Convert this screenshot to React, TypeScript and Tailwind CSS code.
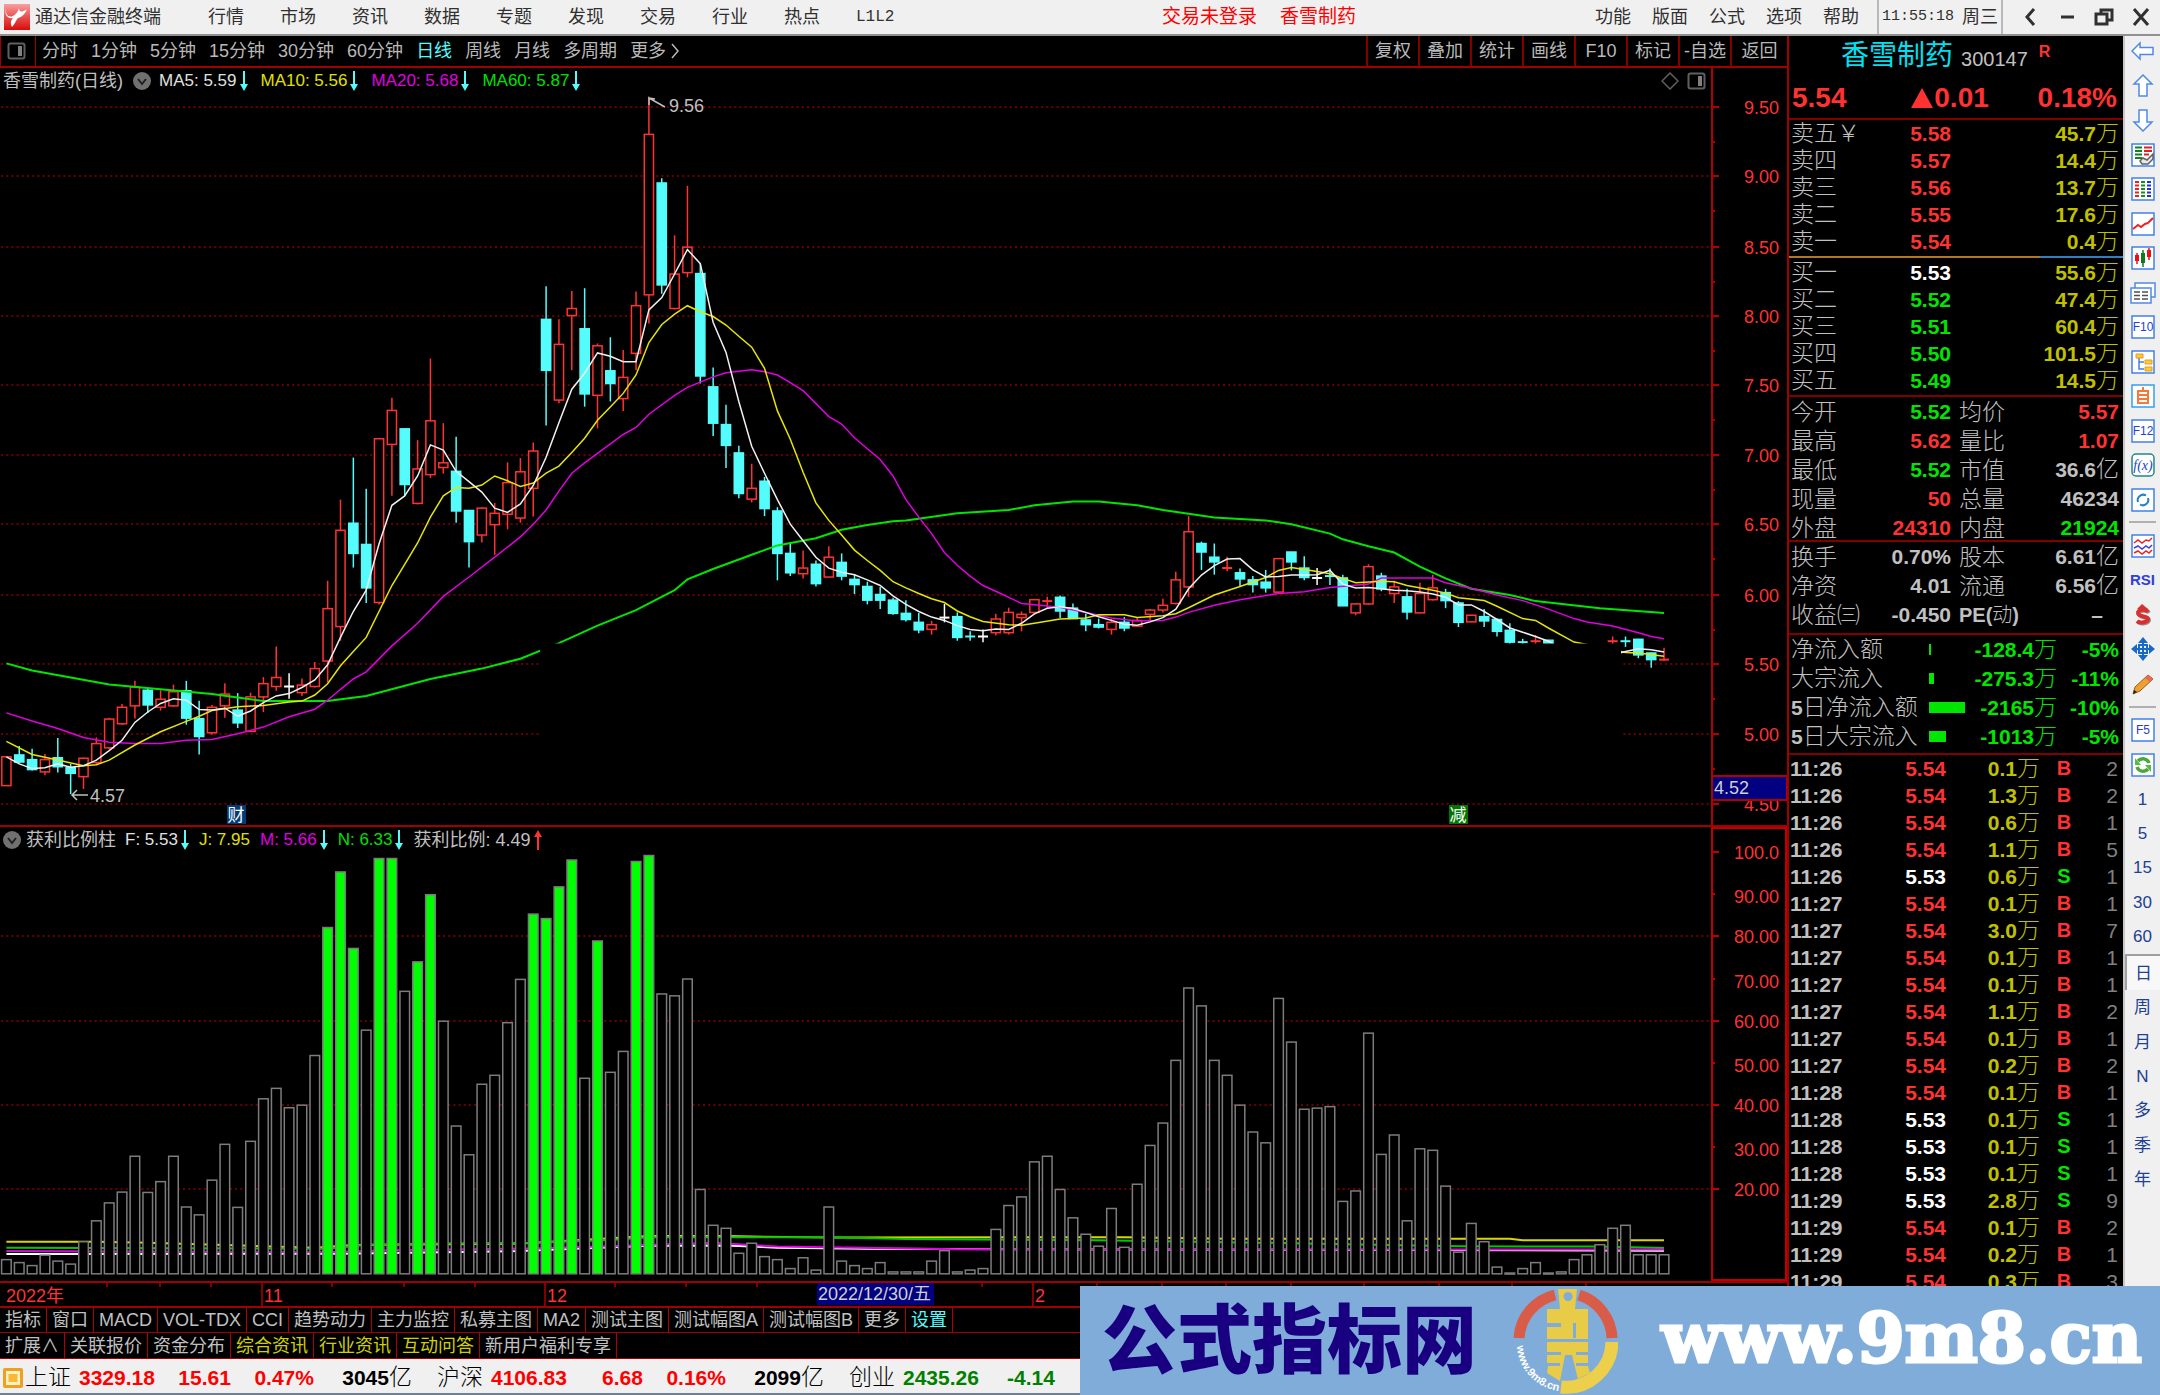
import type { ReactNode } from 'react';
import { clsx } from 'clsx';

type Candle = [kind: 'r' | 'c' | 'w', high: number, top: number, bottom: number, low: number];
type Point = [index: number, value: number];

const CANDLES: Candle[] = [
  ['r', 1412, 1413, 1474, 1474], ['c', 1390, 1409, 1424, 1426], ['c', 1396, 1419, 1440, 1442], ['r', 1407, 1419, 1445, 1452],
  ['c', 1373, 1415, 1434, 1446], ['c', 1428, 1436, 1448, 1492], ['r', 1415, 1416, 1455, 1481], ['r', 1372, 1385, 1425, 1430],
  ['r', 1330, 1333, 1394, 1397], ['r', 1301, 1308, 1343, 1345], ['r', 1252, 1265, 1305, 1332], ['c', 1268, 1272, 1303, 1320],
  ['r', 1272, 1291, 1308, 1315], ['r', 1260, 1275, 1305, 1307], ['c', 1252, 1273, 1331, 1345], ['c', 1294, 1332, 1370, 1408],
  ['r', 1303, 1308, 1362, 1366], ['r', 1257, 1280, 1305, 1330], ['c', 1278, 1314, 1341, 1352], ['r', 1277, 1286, 1359, 1360],
  ['r', 1244, 1258, 1286, 1318], ['r', 1179, 1245, 1264, 1273], ['w', 1236, 1264, 1264, 1290], ['r', 1247, 1261, 1277, 1284],
  ['r', 1212, 1226, 1264, 1266], ['r', 1040, 1099, 1210, 1255], ['r', 868, 933, 1137, 1167], ['c', 779, 918, 982, 1012],
  ['c', 845, 963, 1055, 1087], ['r', 737, 739, 1086, 1090], ['r', 652, 679, 751, 860], ['c', 717, 718, 836, 860],
  ['r', 742, 803, 876, 878], ['r', 569, 701, 815, 822], ['r', 706, 790, 800, 813], ['c', 735, 808, 892, 917],
  ['c', 890, 891, 957, 1012], ['r', 884, 886, 943, 959], ['r', 875, 897, 921, 985], ['r', 789, 832, 899, 931],
  ['r', 780, 809, 907, 917], ['r', 747, 765, 844, 904], ['c', 416, 486, 594, 711], ['r', 486, 539, 657, 664],
  ['r', 426, 463, 478, 594], ['c', 420, 506, 644, 671], ['r', 537, 542, 647, 717], ['c', 524, 595, 622, 660],
  ['r', 551, 609, 654, 680], ['r', 427, 457, 558, 594], ['r', 14, 94, 434, 495], ['c', 187, 197, 413, 432],
  ['r', 308, 390, 463, 465], ['r', 203, 333, 387, 397], ['c', 368, 389, 606, 622], ['c', 588, 629, 706, 733],
  ['c', 667, 709, 753, 801], ['c', 754, 769, 855, 865], ['r', 792, 844, 867, 874], ['c', 820, 829, 887, 903],
  ['c', 884, 892, 982, 1039], ['c', 959, 982, 1023, 1030], ['r', 976, 1013, 1025, 1035], ['c', 997, 1005, 1046, 1052],
  ['r', 967, 990, 1032, 1033], ['c', 982, 1001, 1030, 1039], ['c', 1026, 1037, 1048, 1068], ['c', 1042, 1052, 1081, 1090],
  ['c', 1053, 1069, 1081, 1100], ['c', 1076, 1081, 1109, 1112], ['c', 1081, 1109, 1122, 1126], ['c', 1108, 1128, 1144, 1151],
  ['r', 1125, 1133, 1143, 1154], ['w', 1089, 1118, 1118, 1128], ['c', 1107, 1116, 1160, 1167], ['c', 1147, 1158, 1158, 1167],
  ['w', 1143, 1158, 1158, 1170], ['r', 1110, 1121, 1150, 1156], ['r', 1097, 1107, 1150, 1154], ['r', 1105, 1111, 1118, 1147],
  ['r', 1080, 1080, 1107, 1112], ['r', 1074, 1083, 1083, 1097], ['c', 1071, 1075, 1104, 1119], ['c', 1088, 1098, 1120, 1121],
  ['c', 1110, 1123, 1133, 1147], ['c', 1120, 1133, 1138, 1141], ['r', 1121, 1128, 1143, 1154], ['c', 1117, 1128, 1140, 1147],
  ['r', 1119, 1124, 1136, 1138], ['r', 1100, 1102, 1111, 1126], ['r', 1078, 1092, 1102, 1107], ['r', 1021, 1038, 1088, 1090],
  ['r', 903, 936, 1053, 1074], ['c', 957, 961, 979, 1017], ['c', 961, 990, 1000, 1027], ['r', 989, 1013, 1016, 1020],
  ['c', 1014, 1023, 1036, 1052], ['c', 1030, 1038, 1048, 1065], ['c', 1017, 1043, 1055, 1065], ['r', 993, 993, 1064, 1066],
  ['c', 979, 979, 1000, 1018], ['c', 988, 1013, 1033, 1039], ['w', 1013, 1034, 1034, 1049], ['c', 1014, 1030, 1032, 1049],
  ['c', 1027, 1034, 1093, 1093], ['r', 1088, 1089, 1108, 1113], ['r', 1005, 1010, 1089, 1090], ['c', 1023, 1030, 1057, 1062],
  ['r', 1040, 1053, 1067, 1087], ['c', 1057, 1074, 1106, 1122], ['r', 1044, 1067, 1108, 1109], ['r', 1027, 1055, 1080, 1082],
  ['c', 1057, 1065, 1082, 1098], ['c', 1083, 1087, 1128, 1138], ['r', 1112, 1113, 1127, 1128], ['c', 1100, 1116, 1125, 1138],
  ['c', 1120, 1122, 1147, 1158], ['c', 1130, 1145, 1170, 1175], ['c', 1163, 1170, 1172, 1200], ['r', 1155, 1168, 1171, 1175],
  ['c', 1165, 1166, 1210, 1212], ['c', 1190, 1200, 1240, 1244], ['r', 1208, 1213, 1240, 1244], ['r', 1190, 1196, 1214, 1220],
  ['r', 1180, 1184, 1200, 1208], ['r', 1158, 1168, 1172, 1175], ['c', 1158, 1168, 1169, 1180], ['c', 1163, 1164, 1197, 1204],
  ['c', 1192, 1193, 1207, 1224], ['r', 1182, 1207, 1209, 1210],
];

const seq = (start: number, values: number[]): Point[] => values.map((v, i) => [start + i, v]);

const MA5 = seq(0, [
  1413, 1428, 1438, 1436, 1428, 1435, 1432, 1420, 1400, 1378, 1340, 1318, 1300, 1290, 1293, 1313, 1314, 1310, 1327, 1316,
  1298, 1284, 1279, 1266, 1250, 1218, 1160, 1105, 1060, 962, 880, 860, 818, 752, 763, 808, 830, 852, 886, 895,
  877, 838, 778, 705, 634, 600, 557, 564, 576, 576, 466, 440, 390, 338, 368, 492, 556, 660, 755, 812,
  868, 920, 955, 990, 1013, 1022, 1027, 1038, 1050, 1072, 1090, 1105, 1117, 1124, 1135, 1143, 1146, 1142, 1143, 1130,
  1110, 1098, 1095, 1099, 1107, 1116, 1124, 1132, 1134, 1127, 1118, 1100, 1057, 1028, 1008, 994, 993, 1017, 1032, 1031,
  1028, 1028, 1027, 1018, 1047, 1055, 1054, 1057, 1060, 1061, 1064, 1068, 1075, 1091, 1091, 1105, 1122, 1140, 1149, 1158,
  1168, 1185, 1200, 1202, 1200, 1197, 1190, 1184, 1186, 1191,
]);
const MA10: Point[] = [
  [0, 1380], [2, 1408], [4, 1420], [6, 1432], [7, 1430], [8, 1420], [10, 1388], [12, 1360], [14, 1338], [15, 1327], [16, 1315],
  [18, 1307], [20, 1304], [22, 1297], [23, 1295], [24, 1282], [25, 1258], [26, 1220], [27, 1190], [28, 1160], [29, 1105],
  [30, 1050], [31, 1005], [32, 960], [33, 905], [34, 860], [35, 842], [36, 844], [37, 837], [38, 818], [39, 828], [40, 840],
  [41, 833], [42, 812], [43, 797], [44, 768], [45, 738], [46, 700], [47, 672], [48, 643], [49, 604], [50, 535], [51, 497],
  [52, 475], [53, 457], [54, 470], [55, 480], [56, 498], [57, 522], [58, 545], [59, 590], [60, 680], [61, 740], [62, 810],
  [63, 875], [64, 912], [65, 943], [66, 975], [67, 997], [68, 1018], [69, 1042], [70, 1055], [71, 1067], [72, 1078],
  [73, 1086], [74, 1104], [75, 1116], [76, 1126], [78, 1133], [79, 1134], [80, 1130], [82, 1121], [84, 1119], [85, 1112],
  [87, 1112], [88, 1118], [90, 1114], [91, 1110], [92, 1097], [94, 1070], [96, 1052], [98, 1033], [99, 1018], [100, 1012],
  [102, 1020], [103, 1025], [104, 1035], [105, 1044], [107, 1041], [108, 1042], [109, 1050], [111, 1060], [112, 1066],
  [113, 1076], [115, 1082], [116, 1094], [118, 1120], [119, 1124], [120, 1140], [122, 1170], [124, 1180], [126, 1192],
  [127, 1193], [129, 1200],
];
const MA20: Point[] = [
  [0, 1320], [2, 1337], [4, 1353], [6, 1372], [8, 1382], [10, 1385], [12, 1385], [14, 1378], [16, 1376], [18, 1364], [20, 1350],
  [22, 1328], [24, 1312], [25, 1293], [26, 1270], [27, 1248], [28, 1233], [30, 1178], [32, 1130], [34, 1073], [36, 1032],
  [38, 990], [40, 947], [41, 920], [42, 890], [43, 850], [44, 812], [45, 790], [46, 770], [48, 730], [49, 715], [50, 687],
  [52, 647], [53, 630], [55, 608], [56, 599], [58, 593], [59, 597], [60, 604], [61, 620], [62, 637], [64, 692], [65, 708],
  [66, 737], [67, 760], [68, 783], [69, 818], [70, 868], [71, 905], [72, 940], [73, 980], [74, 1007], [75, 1030], [76, 1050],
  [77, 1062], [79, 1088], [82, 1096], [84, 1107], [86, 1119], [88, 1125], [90, 1124], [91, 1117], [92, 1107], [94, 1092],
  [96, 1080], [99, 1067], [101, 1063], [103, 1054], [106, 1047], [107, 1034], [111, 1034], [112, 1044], [114, 1056],
  [116, 1070], [118, 1082], [120, 1100], [122, 1120], [123, 1127], [125, 1136], [127, 1150], [128, 1158], [129, 1163],
];
const MA60: Point[] = [
  [0, 1215], [2, 1230], [5, 1245], [8, 1260], [12, 1270], [16, 1280], [20, 1295], [25, 1295], [28, 1284], [33, 1248], [37, 1226],
  [40, 1205], [43, 1172], [46, 1135], [49, 1102], [52, 1060], [53, 1037], [55, 1015], [58, 985], [60, 965], [63, 950],
  [65, 932], [67, 922], [69, 914], [70, 912], [74, 897], [78, 890], [80, 880], [83, 872], [85, 872], [88, 880], [90, 890],
  [94, 906], [98, 912], [100, 920], [103, 940], [104, 952], [106, 967], [108, 980], [110, 1010], [112, 1035], [114, 1057],
  [117, 1070], [119, 1083], [124, 1098], [129, 1108],
];

const PROFIT = [
  1205, 1213, 1221, 1193, 1209, 1217, 1157, 1101, 1053, 1024, 928, 1025, 996, 928, 1064, 1085, 992, 896, 1065, 888,
  774, 746, 798, 791, 658, 315, 166, 371, 590, 130, 130, 486, 407, 227, 566, 847, 924, 735, 711, 570,
  454, 279, 291, 206, 134, 719, 351, 703, 647, 138, 122, 493, 498, 453, 1017, 1113, 1121, 1188, 1161, 1197,
  1205, 1229, 1200, 1233, 1064, 1209, 1221, 1229, 1213, 1238, 1238, 1238, 1209, 1181, 1238, 1233, 1229, 1124, 1060, 1037,
  943, 928, 1017, 1093, 1137, 1169, 1068, 1172, 1003, 899, 839, 671, 477, 525, 671, 711, 791, 863, 892, 505,
  622, 802, 799, 795, 1049, 1021, 598, 923, 871, 1101, 908, 912, 1008, 1185, 1108, 1157, 1225, 1241, 1229, 1213,
  1241, 1238, 1205, 1192, 1165, 1121, 1113, 1192, 1192, 1192,
];

const SUB_LINES: { color: string; points: Point[] }[] = [
  { color: '#d8d800', points: [[0, 1157], [7, 1157], [11, 1160], [15, 1164], [19, 1168], [24, 1173], [27, 1166], [40, 1162], [50, 1142], [56, 1142], [64, 1146], [87, 1145], [95, 1149], [117, 1149], [118, 1153], [129, 1153]] },
  { color: '#00c800', points: [[0, 1173], [25, 1176], [28, 1165], [33, 1162], [41, 1160], [47, 1152], [50, 1145], [64, 1145], [70, 1150], [85, 1153], [100, 1161], [113, 1169], [124, 1170], [129, 1174]] },
  { color: '#ffffff', points: [[0, 1190], [26, 1189], [40, 1182], [50, 1168], [56, 1167], [60, 1173], [67, 1176], [129, 1181]] },
  { color: '#e000e0', points: [[0, 1182], [25, 1185], [30, 1180], [41, 1175], [48, 1168], [55, 1160], [60, 1170], [74, 1177], [129, 1178]] },
];

const PRICE_GRID = [
  ['9.50', 107], ['9.00', 176], ['8.50', 247], ['8.00', 316], ['7.50', 385], ['7.00', 455], ['6.50', 524],
  ['6.00', 595], ['5.50', 664], ['5.00', 734], ['4.50', 804],
] as [string, number][];

const PERCENT_GRID = [
  ['100.0', 852, 852], ['90.00', 896, 894], ['80.00', 936, 936], ['70.00', 981, 979], ['60.00', 1021, 1021],
  ['50.00', 1065, 1063], ['40.00', 1105, 1105], ['30.00', 1149, 1147], ['20.00', 1189, 1189],
] as [string, number, number][];

const cx = (i: number) => 6.4 + i * 12.85;
const priceY = (v: number) => v / 2.119 - 4;
const subY = (v: number) => v / 2.68 - 43;
const toPath = (points: Point[], y: (v: number) => number) =>
  points.map(([i, v]) => `${cx(i).toFixed(1)},${y(v).toFixed(1)}`).join(' ');

function PriceChart() {
  return (
    <svg viewBox="0 0 1711 731" preserveAspectRatio="none" className="block h-[731px] w-full">
      {PRICE_GRID.map(([label, y]) => (
        <line key={label} x1="1" x2="1711" y1={y - 94} y2={y - 94} stroke="#8c0000" strokeWidth="1.5" strokeDasharray="2 3.2" />
      ))}
      {CANDLES.map(([kind, high, top, bottom, low], i) => {
        const x = cx(i);
        const color = kind === 'r' ? '#ff3232' : kind === 'c' ? '#54fcfc' : '#ffffff';
        const h = priceY(bottom) - priceY(top);
        return (
          <g key={i} stroke={color} strokeWidth="1.5">
            <line x1={x} x2={x} y1={priceY(high)} y2={priceY(low)} />
            {h < 2 ? (
              <line x1={x - 5} x2={x + 5} y1={priceY(top)} y2={priceY(top)} strokeWidth="2" />
            ) : (
              <rect x={x - 4.6} y={priceY(top)} width="9.2" height={h} fill={kind === 'c' ? color : '#000'} />
            )}
          </g>
        );
      })}
      <g fill="none" strokeWidth="1.5">
        <polyline points={toPath(MA60, priceY)} stroke="#00e600" strokeWidth="2" />
        <polyline points={toPath(MA20, priceY)} stroke="#e000e0" />
        <polyline points={toPath(MA10, priceY)} stroke="#e6e600" />
        <polyline points={toPath(MA5, priceY)} stroke="#f0f0f0" />
      </g>
      <rect x="540" y="549.5" width="1081" height="105" fill="#000" />
      <g fill="none" stroke="#c0c0c0" strokeWidth="1.5">
        <path d="M655 5l-6-1M649 11V4l16 9" />
        <path d="M88 701H72M77 696l-5 5 5 5" />
      </g>
      <g fill="#c0c0c0" fontSize="18" className="font-['Liberation_Sans',sans-serif]">
        <text x="669" y="18">9.56</text>
        <text x="90" y="708">4.57</text>
      </g>
      <rect x="227" y="711" width="19" height="19" fill="#003c78" />
      <rect x="1449" y="711" width="19" height="19" fill="#007800" />
      <g fill="#fff" fontSize="17" textAnchor="middle" className="font-['Noto_Sans_CJK_SC',sans-serif]">
        <text x="236" y="727">财</text>
        <text x="1458" y="727">减</text>
      </g>
    </svg>
  );
}

function ProfitChart() {
  const base = subY(1243);
  return (
    <svg viewBox="0 0 1711 428" preserveAspectRatio="none" className="block h-[428px] w-full">
      {PERCENT_GRID.filter((_, i) => i > 0 && i % 2 === 0).map(([label, , y]) => (
        <line key={label} x1="1" x2="1711" y1={y - 853} y2={y - 853} stroke="#8c0000" strokeWidth="1.5" strokeDasharray="2 3.2" />
      ))}
      {SUB_LINES.map((line) => (
        <polyline key={line.color} points={toPath(line.points, subY)} fill="none" stroke={line.color} strokeWidth="2" />
      ))}
      {PROFIT.map((v, i) => (
        <rect
          key={i}
          x={cx(i) - 4.8}
          y={subY(v)}
          width="9.6"
          height={Math.max(base - subY(v), 1)}
          fill={v < 420 ? '#00ff00' : '#000'}
          stroke="#7c7c7c"
          strokeWidth="1.5"
        />
      ))}
    </svg>
  );
}

function PriceAxis() {
  return (
    <svg viewBox="0 0 76 757" className="block h-[757px] w-[76px] shrink-0">
      <path d="M1 0V757" stroke="#b00000" strokeWidth="2" />
      {PRICE_GRID.map(([label, y], i) => (
        <g key={label}>
          <path d={`M2 ${y - 68}h6`} stroke="#b00000" strokeWidth="2" />
          {i < 10 && <path d={`M2 ${y - 33}h2`} stroke="#b00000" strokeWidth="2" />}
          <text x="68" y={y - 61} fill="#ff3232" fontSize="18" textAnchor="end" className="font-['Liberation_Sans',sans-serif]">
            {label}
          </text>
        </g>
      ))}
      <rect x="1" y="708" width="75" height="24" fill="#000080" stroke="#b00000" strokeWidth="2" />
      <text x="3" y="726" fill="#d0d0d0" fontSize="18" className="font-['Liberation_Sans',sans-serif]">4.52</text>
    </svg>
  );
}

function PercentAxis() {
  return (
    <svg viewBox="0 0 76 454" className="block h-[454px] w-[76px] shrink-0">
      <rect x="1" y="1" width="74" height="452" fill="none" stroke="#c00000" strokeWidth="2" />
      {PERCENT_GRID.map(([label, y, tick], i) => (
        <g key={label}>
          <path d={`M2 ${tick - 827}h${i % 2 ? 2 : 6}`} stroke="#c00000" strokeWidth="2" />
          <text x="68" y={y - 820} fill="#ff3232" fontSize="18" textAnchor="end" className="font-['Liberation_Sans',sans-serif]">
            {label}
          </text>
        </g>
      ))}
    </svg>
  );
}

const MINOR_TICKS = [107, 160, 211, 332, 404, 475, 615, 686, 757, 982, 1097, 1162, 1226, 1291, 1364, 1439, 1512, 1586];

function TimeAxis() {
  return (
    <svg viewBox="0 0 1787 23" preserveAspectRatio="none" className="block h-[23px] w-full font-['Liberation_Sans','Noto_Sans_CJK_SC',sans-serif]">
      {MINOR_TICKS.map((x) => (
        <path key={x} d={`M${x} 0v4`} stroke="#b00000" strokeWidth="1.5" />
      ))}
      {[262, 545, 1033].map((x) => (
        <path key={x} d={`M${x} 0v23`} stroke="#b00000" strokeWidth="1.5" />
      ))}
      <g fill="#ff3232" fontSize="18">
        <text x="6" y="19">2022年</text>
        <text x="264" y="19">11</text>
        <text x="547" y="19">12</text>
        <text x="1035" y="19">2</text>
      </g>
      <rect x="817" y="0" width="117" height="22" fill="#000080" />
      <text x="818" y="17" fill="#d0d0d0" fontSize="18">2022/12/30/五</text>
    </svg>
  );
}

const MENU = ['行情', '市场', '资讯', '数据', '专题', '发现', '交易', '行业', '热点'];
const MENU_RIGHT = ['功能', '版面', '公式', '选项', '帮助'];

function MenuBar() {
  return (
    <header className="flex h-[36px] items-center border-b-2 border-[#909090] bg-[#f0f0f0] text-[18px] leading-[24px] text-[#303030]">
      <svg viewBox="0 0 26 26" className="ml-[4px] h-[26px] w-[26px]">
        <defs>
          <linearGradient id="brand" x1="0" y1="0" x2="0" y2="1">
            <stop offset="0" stopColor="#f8a0a0" />
            <stop offset=".5" stopColor="#e85050" />
            <stop offset="1" stopColor="#d80c0c" />
          </linearGradient>
        </defs>
        <rect width="26" height="26" fill="url(#brand)" />
        <path d="M2 4C1 10 4 14 9 12C12 10 14 8 15 4C15 8 17 9 23 5C21 10 18 13 14 14C12 16 11 20 8 23C6 19 7 16 9 14C4 15 0 11 2 4Z" fill="#fff" />
      </svg>
      <span className="ml-[5px]">通达信金融终端</span>
      <nav className="ml-[47px] flex gap-9">
        {MENU.map((item) => (
          <button key={item}>{item}</button>
        ))}
        <button className="font-['Liberation_Mono',monospace] text-[16px]">L1L2</button>
      </nav>
      <div className="ml-auto flex gap-[23px] text-[19px] text-[#ff0000]">
        <button>交易未登录</button>
        <button>香雪制药</button>
      </div>
      <nav className="ml-[239px] flex gap-[21px]">
        {MENU_RIGHT.map((item) => (
          <button key={item}>{item}</button>
        ))}
      </nav>
      <div className="ml-[18px] flex h-full w-[126px] items-center justify-between border-x-2 border-[#b8b8b8] px-[3px]">
        <time className="font-['Liberation_Mono',monospace] text-[15px]">11:55:18</time>
        <span>周三</span>
      </div>
      <div className="flex items-center gap-[17px] pr-[9px] pl-[17px]">
        <button aria-label="收起"><svg viewBox="0 0 20 20" className="h-5 w-5" fill="none" stroke="#303030" strokeWidth="3"><path d="M14 2L7 10l7 8" /></svg></button>
        <button aria-label="最小化"><svg viewBox="0 0 20 20" className="h-5 w-5" fill="none" stroke="#303030" strokeWidth="3"><path d="M4 10h13" /></svg></button>
        <button aria-label="还原"><svg viewBox="0 0 20 20" className="h-5 w-5" fill="none" stroke="#303030" strokeWidth="3"><path d="M2 7h11v10H2zM7 7V3h11v10h-5" /></svg></button>
        <button aria-label="关闭"><svg viewBox="0 0 20 20" className="h-5 w-5" fill="none" stroke="#303030" strokeWidth="3"><path d="M3 2l14 16M17 2L3 18" /></svg></button>
      </div>
    </header>
  );
}

const PERIODS = ['分时', '1分钟', '5分钟', '15分钟', '30分钟', '60分钟', '日线', '周线', '月线', '多周期'];
const CHART_ACTIONS = ['复权', '叠加', '统计', '画线', 'F10', '标记', '-自选', '返回'];

function PanelIcon() {
  return (
    <svg viewBox="0 0 20 18" className="h-[18px] w-[20px]">
      <rect x="1.5" y="1.5" width="16" height="15" rx="2" fill="none" stroke="#606060" strokeWidth="2" />
      <rect x="11" y="4" width="4" height="10" fill="#808080" />
    </svg>
  );
}

function PeriodBar() {
  return (
    <div className="flex h-[32px] border-b-2 border-[#a00000] text-[18px] text-[#b8b8b8]">
      <button aria-label="侧栏" className="flex w-[36px] items-center border-r border-l border-[#a00000] pl-[6px]"><PanelIcon /></button>
      <nav className="flex items-center gap-[13px] pl-[6px]">
        {PERIODS.map((item) => (
          <button key={item} className={clsx(item === '日线' && 'text-[#54fcfc]')}>{item}</button>
        ))}
        <button className="flex items-center">
          更多
          <svg viewBox="0 0 12 16" className="ml-[3px] h-4 w-3" fill="none" stroke="#b8b8b8" strokeWidth="1.5"><path d="M3 1l6 7-6 7" /></svg>
        </button>
      </nav>
      <nav className="ml-auto flex">
        {CHART_ACTIONS.map((item) => (
          <button key={item} className={clsx('border-l-2 border-[#800000] text-center', item === '返回' ? 'w-[57px]' : 'w-[52px]')}>{item}</button>
        ))}
      </nav>
    </div>
  );
}

function DropIcon() {
  return (
    <svg viewBox="0 0 18 18" className="h-[18px] w-[18px]">
      <circle cx="9" cy="9" r="9" fill="#707070" />
      <path d="M5 7l4 5 4-5" fill="none" stroke="#202020" strokeWidth="2" />
    </svg>
  );
}

function Arrow({ up = false }: { up?: boolean }) {
  return (
    <svg viewBox="0 0 8 20" className="ml-[3px] h-5 w-2">
      {up ? <path d="M3 20V7H0l4-7 4 7H5v13z" fill="#ff3232" /> : <path d="M3 0v13H0l4 7 4-7H5V0z" fill="#54fcfc" />}
    </svg>
  );
}

function Legend({ color, children }: { color: string; children: ReactNode }) {
  return <span className={clsx('flex items-center', color)}>{children}</span>;
}

function PriceHeader() {
  return (
    <div className="flex h-[26px] items-center pr-[4px] pl-[3px] text-[17px] text-[#c0c0c0]">
      <span className="text-[18px]">香雪制药(日线)</span>
      <button aria-label="指标菜单" className="mr-[8px] ml-[10px]"><DropIcon /></button>
      <div className="flex gap-[13px]">
        <Legend color="text-[#e0e0e0]">MA5: 5.59<Arrow /></Legend>
        <Legend color="text-[#e0e000]">MA10: 5.56<Arrow /></Legend>
        <Legend color="text-[#e000e0]">MA20: 5.68<Arrow /></Legend>
        <Legend color="text-[#00e000]">MA60: 5.87<Arrow /></Legend>
      </div>
      <svg viewBox="0 0 18 18" className="mr-[8px] ml-auto h-[18px] w-[18px]"><path d="M9 1l8 8-8 8-8-8z" fill="none" stroke="#606060" strokeWidth="1.5" /></svg>
      <PanelIcon />
    </div>
  );
}

function ProfitHeader() {
  return (
    <div className="flex h-[26px] items-center pl-[3px] text-[17px] text-[#c0c0c0]">
      <button aria-label="指标菜单" className="mr-[5px]"><DropIcon /></button>
      <span className="text-[18px]">获利比例柱</span>
      <div className="ml-[9px] flex gap-[10px]">
        <Legend color="text-[#e0e0e0]">F: 5.53<Arrow /></Legend>
        <Legend color="text-[#e0e000]">J: 7.95</Legend>
        <Legend color="text-[#e000e0]">M: 5.66<Arrow /></Legend>
        <Legend color="text-[#00e000]">N: 6.33<Arrow /></Legend>
        <Legend color="text-[#c0c0c0]"><span className="text-[18px]">获利比例: 4.49</span><Arrow up /></Legend>
      </div>
    </div>
  );
}

const INDICATORS = ['指标', '窗口', 'MACD', 'VOL-TDX', 'CCI', '趋势动力', '主力监控', '私募主图', 'MA2', '测试主图', '测试幅图A', '测试幅图B', '更多', '设置'];
const EXTENSIONS = ['扩展∧', '关联报价', '资金分布', '综合资讯', '行业资讯', '互动问答', '新用户福利专享'];
const HIGHLIGHTED = ['综合资讯', '行业资讯', '互动问答'];

function IndicatorTabs() {
  return (
    <div className="text-[18px] leading-[24px] whitespace-nowrap text-[#c0c0c0]">
      <nav className="flex h-[26px] border-t-2 border-[#a00000]">
        {INDICATORS.map((item) => (
          <button key={item} className={clsx('border-r border-[#b00000] px-[5px]', item === '设置' && 'text-[#54fcfc]')}>{item}</button>
        ))}
      </nav>
      <nav className="flex h-[27px] border-y border-[#a00000]">
        {EXTENSIONS.map((item) => (
          <button key={item} className={clsx('border-r border-[#b00000] px-[5px]', HIGHLIGHTED.includes(item) && 'text-[#d0d000]')}>{item}</button>
        ))}
      </nav>
    </div>
  );
}

// Digits are bold while the trailing unit keeps the regular weight
function Num({ value, className }: { value: string; className?: string }) {
  const unit = /[万亿]$/.test(value) ? value.slice(-1) : '';
  return (
    <span className={clsx('whitespace-nowrap', className)}>
      <b>{unit ? value.slice(0, -1) : value}</b>
      {unit && <span className="text-[23px] font-light">{unit}</span>}
    </span>
  );
}

const RED = 'text-[#ff3232]';
const GREEN = 'text-[#00e600]';
const WHITE = 'text-white';
const GRAY = 'text-[#c0c0c0]';
const GOLD = 'text-[#c0c000]';

const ASKS = [['卖五', '5.58', '45.7万'], ['卖四', '5.57', '14.4万'], ['卖三', '5.56', '13.7万'], ['卖二', '5.55', '17.6万'], ['卖一', '5.54', '0.4万']];
const BIDS = [['买一', '5.53', '55.6万'], ['买二', '5.52', '47.4万'], ['买三', '5.51', '60.4万'], ['买四', '5.50', '101.5万'], ['买五', '5.49', '14.5万']];

const STATS = [
  ['今开', '5.52', GREEN, '均价', '5.57', RED],
  ['最高', '5.62', RED, '量比', '1.07', RED],
  ['最低', '5.52', GREEN, '市值', '36.6亿', GRAY],
  ['现量', '50', RED, '总量', '46234', GRAY],
  ['外盘', '24310', RED, '内盘', '21924', GREEN],
];
const RATIOS = [
  ['换手', '0.70%', GRAY, '股本', '6.61亿', GRAY],
  ['净资', '4.01', GRAY, '流通', '6.56亿', GRAY],
  ['收益㈢', '-0.450', GRAY, 'PE(动)', '–', GRAY],
];
const FLOWS: [string, number, string, string][] = [
  ['净流入额', 2, '-128.4万', '-5%'],
  ['大宗流入', 5, '-275.3万', '-11%'],
  ['5日净流入额', 36, '-2165万', '-10%'],
  ['5日大宗流入', 17, '-1013万', '-5%'],
];
const TRADES = [
  ['11:26', '5.54', '0.1', 'B', '2'], ['11:26', '5.54', '1.3', 'B', '2'], ['11:26', '5.54', '0.6', 'B', '1'], ['11:26', '5.54', '1.1', 'B', '5'],
  ['11:26', '5.53', '0.6', 'S', '1'], ['11:27', '5.54', '0.1', 'B', '1'], ['11:27', '5.54', '3.0', 'B', '7'], ['11:27', '5.54', '0.1', 'B', '1'],
  ['11:27', '5.54', '0.1', 'B', '1'], ['11:27', '5.54', '1.1', 'B', '2'], ['11:27', '5.54', '0.1', 'B', '1'], ['11:27', '5.54', '0.2', 'B', '2'],
  ['11:28', '5.54', '0.1', 'B', '1'], ['11:28', '5.53', '0.1', 'S', '1'], ['11:28', '5.53', '0.1', 'S', '1'], ['11:28', '5.53', '0.1', 'S', '1'],
  ['11:29', '5.53', '2.8', 'S', '9'], ['11:29', '5.54', '0.1', 'B', '2'], ['11:29', '5.54', '0.2', 'B', '1'], ['11:29', '5.54', '0.3', 'B', '3'],
];

function OrderRows({ rows, ask }: { rows: string[][]; ask?: boolean }) {
  return (
    <table className="w-full table-fixed leading-[27px]">
      <tbody>
        {rows.map(([label, price, volume], i) => (
          <tr key={label} className="h-[27px]">
            <th className="w-[80px] p-0 text-left text-[23px] font-light whitespace-nowrap">
              {label}
              {ask && i === 0 && <span>￥</span>}
            </th>
            <td className="w-[80px] p-0 text-right"><Num value={price} className={ask ? RED : i === 0 ? WHITE : GREEN} /></td>
            <td className="p-0 text-right"><Num value={volume} className={GOLD} /></td>
          </tr>
        ))}
      </tbody>
    </table>
  );
}

function StatRows({ rows }: { rows: string[][] }) {
  return (
    <table className="w-full table-fixed leading-[28px]">
      <tbody>
        {rows.map(([a, av, ac, b, bv, bc]) => (
          <tr key={a} className="h-[29px]">
            <th className="w-[80px] p-0 text-left text-[23px] font-light">{a}</th>
            <td className="w-[80px] p-0 text-right"><Num value={av} className={ac} /></td>
            <th className="w-[86px] p-0 pl-[8px] text-left text-[23px] font-light whitespace-nowrap">
              {b.startsWith('PE') ? <span className="text-[20px]"><b className="font-bold">PE(</b>动<b className="font-bold">)</b></span> : b}
            </th>
            <td className={clsx('p-0 text-right', bv === '–' && 'pr-[16px]')}><Num value={bv} className={bc} /></td>
          </tr>
        ))}
      </tbody>
    </table>
  );
}

function QuotePanel() {
  return (
    <aside className="w-[336px] shrink-0 border-l-2 border-[#a00000] text-[21px] text-[#c0c0c0]">
      <div className="flex h-[40px] items-center pl-[52px] leading-[40px]">
        <h1 className="text-[28px] text-[#00e0f0]">香雪制药</h1>
        <span className="mt-[6px] ml-[8px] text-[20px]">300147</span>
        <b className="-mt-[8px] ml-[11px] text-[16px] text-[#ff3232]">R</b>
      </div>
      <div className="flex h-[44px] items-center justify-between border-b-2 border-[#800000] pt-[2px] pr-[6px] pl-[3px] text-[28px] font-bold text-[#ff3232]">
        <span>5.54</span>
        <span className="flex items-center pl-[16px]">
          <svg viewBox="0 0 22 20" className="mr-[1px] h-5 w-[22px]"><path d="M11 0l11 20H0z" fill="#ff3232" /></svg>
          0.01
        </span>
        <span>0.18%</span>
      </div>
      <div className="h-[136px] pr-[4px] pl-[2px]"><OrderRows rows={ASKS} ask /></div>
      <div className="flex h-[2px]"><div className="w-3/4 bg-[#b07820]" /><div className="flex-1 bg-[#3080c0]" /></div>
      <div className="h-[139px] border-b-2 border-[#800000] pt-[1px] pr-[4px] pl-[2px]"><OrderRows rows={BIDS} /></div>
      <div className="h-[145px] border-b-2 border-[#800000] pr-[4px] pl-[2px]"><StatRows rows={STATS} /></div>
      <div className="h-[93px] border-b-2 border-[#800000] pr-[4px] pl-[2px]"><StatRows rows={RATIOS} /></div>
      <div className="h-[120px] border-b-2 border-[#800000] pr-[4px] pl-[2px]">
        {FLOWS.map(([label, width, amount, percent]) => (
          <div key={label} className="flex h-[29px] items-center">
            <span className="w-[138px] text-[23px] font-light whitespace-nowrap">
              {label.startsWith('5') ? <><b className="text-[21px] font-bold">5</b>{label.slice(1)}</> : label}
            </span>
            <i className="block h-[11px] bg-[#00e600]" style={{ width }} />
            <Num value={amount} className="ml-auto text-[#00e600]" />
            <Num value={percent} className="w-[62px] text-right text-[#00e600]" />
          </div>
        ))}
      </div>
      <table className="w-full table-fixed leading-[27px]">
        <tbody>
          {TRADES.map(([time, price, volume, side, count], i) => (
            <tr key={i} className="h-[27px]">
              <td className="w-[60px] p-0 pl-[1px] font-bold">{time}</td>
              <td className={clsx('w-[97px] p-0 text-right font-bold', price === '5.54' ? RED : WHITE)}>{price}</td>
              <td className="w-[94px] p-0 text-right"><Num value={`${volume}万`} className={GOLD} /></td>
              <td className={clsx('w-[48px] p-0 text-center text-[20px] font-bold', side === 'B' ? RED : GREEN)}>{side}</td>
              <td className="p-0 pr-[5px] text-right text-[#808080]">{count}</td>
            </tr>
          ))}
        </tbody>
      </table>
    </aside>
  );
}

function Boxed({ children, stroke = '#4080e8' }: { children?: ReactNode; stroke?: string }) {
  return (
    <svg viewBox="0 0 24 24" className="h-6 w-6">
      <rect x="1" y="1" width="22" height="22" fill="#fff" stroke={stroke} strokeWidth="1.5" />
      {children}
    </svg>
  );
}

function ArrowIcon({ d }: { d: string }) {
  return (
    <svg viewBox="0 0 24 24" className="h-6 w-6"><path d={d} fill="#fff" stroke="#5088e8" strokeWidth="1.5" /></svg>
  );
}

function BoxedText({ children }: { children: string }) {
  return (
    <Boxed>
      <text x="12" y="16" textAnchor="middle" fontSize="12" fill="#2840d0" className="font-['Liberation_Sans',sans-serif]">{children}</text>
    </Boxed>
  );
}

const TOOLS: [string, ReactNode][] = [
  ['后退', <ArrowIcon d="M1 12l8-8v4.500h13v7H9V20z" />],
  ['上移', <ArrowIcon d="M12 1l9 9h-5v12H8V10H3z" />],
  ['下移', <ArrowIcon d="M12 23l9-9h-5V2H8v12H3z" />],
  ['报价', (
    <Boxed>
      <path d="M4 4.500h7M4 8h7M4 11.500h7M4 15h7" stroke="#108020" strokeWidth="2" />
      <path d="M13 4.500h8M13 8h8M13 11.500h5" stroke="#e02020" strokeWidth="2" />
      <path d="M9 18l3-3 4 2 6-6v5l-5 5h-6z" fill="#e8e8e8" stroke="#606060" strokeWidth="1.5" />
    </Boxed>
  )],
  ['列表', (
    <Boxed>
      <path d="M6 4v16" stroke="#f02020" strokeWidth="4" strokeDasharray="2 1.500" />
      <path d="M12 4v16" stroke="#109020" strokeWidth="4" strokeDasharray="2 1.500" />
      <path d="M18 4v16" stroke="#2030e0" strokeWidth="4" strokeDasharray="2 1.500" />
    </Boxed>
  )],
  ['分时', <Boxed><path d="M2 17l5-4 3 2 4-3 3-1 5-5" fill="none" stroke="#f02020" strokeWidth="2" /></Boxed>],
  ['K线', (
    <Boxed>
      <path d="M6 7v11M18 2v12" stroke="#e81010" strokeWidth="1.5" /><path d="M4 9h4v6H4zM16 4h4v7h-4z" fill="#e81010" />
      <path d="M12 4v17" stroke="#107820" strokeWidth="1.5" /><path d="M10 7h4v10h-4z" fill="#107820" />
    </Boxed>
  )],
  ['多窗', (
    <svg viewBox="0 0 26 24" className="h-6 w-[26px]">
      <path d="M5 2h20v14H5z" fill="#fff" stroke="#5088e8" strokeWidth="1.5" />
      <path d="M1 7h20v15H1z" fill="#fff" stroke="#5088e8" strokeWidth="1.5" />
      <path d="M4 11h6M12 11h6M4 14.500h6M12 14.500h6M4 18h6M12 18h6" stroke="#505050" strokeWidth="1.5" />
    </svg>
  )],
  ['F10', <BoxedText>F10</BoxedText>],
  ['树形', (
    <Boxed>
      <path d="M8 8v11h5M8 12h5" fill="none" stroke="#4080e8" strokeWidth="1.5" />
      <path d="M5 4h7v4H5zM14 10h7v4h-7zM14 17h7v4h-7z" fill="#ffc838" stroke="#e0a020" />
    </Boxed>
  )],
  ['自选', (
    <Boxed stroke="#30a0f0">
      <path d="M7 7h10v12H7zM7 11h10M7 15h10M12 3v4" fill="none" stroke="#f87838" strokeWidth="2" />
    </Boxed>
  )],
  ['F12', <BoxedText>F12</BoxedText>],
  ['公式', (
    <svg viewBox="0 0 24 24" className="h-6 w-6">
      <rect x="1" y="1" width="22" height="22" rx="4" fill="#fff" stroke="#208888" strokeWidth="1.5" />
      <text x="12" y="17" textAnchor="middle" fontSize="14" fontStyle="italic" fill="#2048c0" className="font-['Liberation_Serif',serif]">f(x)</text>
    </svg>
  )],
  ['刷新', <Boxed><path d="M15 7.500a5.500 5.500 0 0 0-8 6.500M9 16.500a5.500 5.500 0 0 0 8-6.500" fill="none" stroke="#2080c8" strokeWidth="2" /></Boxed>],
];

const TOOLS_EXTRA: [string, ReactNode][] = [
  ['叠加', (
    <Boxed>
      <path d="M3 9l4-3 4 3 4-3 3 1 3-3" fill="none" stroke="#f02020" strokeWidth="1.5" />
      <path d="M3 14l4-2 4 3 4-3 3 2 3-3" fill="none" stroke="#4040e0" strokeWidth="1.5" />
      <path d="M3 19l4-2 4 3 4-3 3 2 3-3" fill="none" stroke="#f02020" strokeWidth="1.5" />
    </Boxed>
  )],
  ['RSI', <span className="text-[15px] font-bold text-[#3040d8]">RSI</span>],
  ['资金', (
    <svg viewBox="0 0 24 24" className="h-6 w-6" fill="none" strokeWidth="4">
      <path d="M18 10c-2-3-10-3-10 1s10 3 10 6-8 5-11 2" stroke="#909090" />
      <path d="M17 9c-2-3-10-3-10 1s10 3 10 6-8 5-11 2" stroke="#d83030" />
      <path d="M6 6l5-5 6 5z" fill="#d83030" stroke="none" />
    </svg>
  )],
  ['移动', (
    <svg viewBox="0 0 24 24" className="h-6 w-6" fill="#1868c8">
      <path d="M12 0l5 6H7zM12 24l5-6H7zM0 12l6-5v10zM24 12l-6-5v10z" />
      <path d="M8 8h8v8H8z" fill="none" stroke="#1868c8" strokeWidth="2" /><path d="M12 6v12M6 12h12" stroke="#1868c8" strokeWidth="2" />
    </svg>
  )],
  ['画笔', (
    <svg viewBox="0 0 24 24" className="h-6 w-6">
      <path d="M2 22l2-7L17 3l5 4L9 19z" fill="#f0a030" stroke="#906020" />
      <path d="M14 6l3-3 5 4-3 3z" fill="#e86858" /><path d="M2 22l1-4 3 2z" fill="#202020" />
    </svg>
  )],
];

const PERIOD_KEYS = ['1', '5', '15', '30', '60', '日', '周', '月', 'N', '多', '季', '年'];

function ToolStrip() {
  return (
    <aside className="flex w-[37px] shrink-0 flex-col border-l-2 border-[#c8c8c8] bg-[#f0f0f0] text-[#204090]">
      <div className="flex h-[480px] flex-col items-center justify-between pt-[3px] pb-[4px]">
        {TOOLS.map(([name, icon]) => (
          <button key={name} aria-label={name}>{icon}</button>
        ))}
      </div>
      <hr className="mx-[4px] mt-[5px] mb-[6px] border-t-2 border-[#b0b0b0]" />
      <div className="flex h-[172px] flex-col">
        {TOOLS_EXTRA.map(([name, icon]) => (
          <button key={name} aria-label={name} className="flex flex-1 items-center justify-center">{icon}</button>
        ))}
      </div>
      <hr className="mx-[4px] my-[5px] border-t-2 border-[#b0b0b0]" />
      <div className="flex h-[484px] flex-col">
        <button aria-label="F5" className="flex flex-1 items-center justify-center"><BoxedText>F5</BoxedText></button>
        <button aria-label="轮换" className="flex flex-1 items-center justify-center">
          <Boxed>
            <path d="M18 10a6.500 6.500 0 0 0-11-2M6 14a6.500 6.500 0 0 0 11 2" fill="none" stroke="#48a838" strokeWidth="3.500" />
            <path d="M4 5v7h6zM20 19v-7h-6z" fill="#58b848" />
          </Boxed>
        </button>
        {PERIOD_KEYS.map((key) => (
          <button
            key={key}
            className={clsx(
              'flex-1 text-[17px] leading-none',
              key === '日' && 'border-t-2 border-l-2 border-[#a0a0a0] bg-[#f8f8f8]'
            )}
          >
            {key}
          </button>
        ))}
      </div>
    </aside>
  );
}

const INDEXES = [
  { name: '上证', value: '3329.18', change: '15.61', percent: '0.47%', amount: '3045亿', color: 'text-[#ff0000]' },
  { name: '沪深', value: '4106.83', change: '6.68', percent: '0.16%', amount: '2099亿', color: 'text-[#ff0000]' },
  { name: '创业', value: '2435.26', change: '-4.14', color: 'text-[#008000]' },
];

function StatusBar() {
  return (
    <footer className="flex h-[36px] items-center border-b-2 border-[#708090] bg-[#f0f0f0] pt-[3px] pl-[2px] text-[21px] whitespace-nowrap text-black">
      <svg viewBox="0 0 22 22" className="h-[22px] w-[22px]">
        <rect x="1" y="1" width="20" height="20" rx="2" fill="#f0a020" />
        <rect x="4" y="4" width="14" height="14" fill="#fff0c0" /><rect x="6.500" y="7" width="9" height="8" fill="#f8b838" />
      </svg>
      {INDEXES.map((item) => (
        <div key={item.name} className="flex w-[412px] shrink-0 items-center">
          <span className="w-[55px] pl-[1px] text-[23px] font-light">{item.name}</span>
          <b className={item.color}>{item.value}</b>
          <b className={clsx('w-[76px] text-right', item.color)}>{item.change}</b>
          {item.percent && <b className={clsx('w-[83px] text-right', item.color)}>{item.percent}</b>}
          {item.amount && <Num value={item.amount} className="w-[98px] text-right" />}
        </div>
      ))}
    </footer>
  );
}

function Banner() {
  return (
    <div className="absolute right-0 bottom-0 flex h-[109px] w-1/2 items-center bg-[#80acd9] pr-[18px] pl-[22px] whitespace-nowrap">
      <strong className="text-[75px] leading-[100px] font-black text-[#180080]">公式指标网</strong>
      <svg viewBox="0 0 110 110" className="ml-[31px] h-[110px] w-[110px] shrink-0">
        <path d="M11 52A47 47 0 0 1 47 9" fill="none" stroke="#d85c48" strokeWidth="11" />
        <path d="M71 9A47 47 0 0 1 104 52" fill="none" stroke="#d85c48" strokeWidth="11" />
        <path d="M104 56A46 46 0 0 1 53 101" fill="none" stroke="#ecd04c" strokeWidth="13" />
        <path fillRule="evenodd" fill="#e8cc48" d="M50 3h19l-2 20h13v30H39V41h14v-4H39V23h13zM60 6a4.500 4.500 0 1 0 .1 0zM65 37v15h3V37z" />
        <path fill="#e8cc48" d="M39 56h41v10H68v3h12v8H68v3h12l2 7-12 6-6-24h-7l-5 26-13-8 1-7h12v-3H39v-8h14v-3H39z" />
        <defs><path id="ring" d="M9 60A48 48 0 0 0 52 105" /></defs>
        <text fontSize="11" fontWeight="bold" fill="#fff" className="font-['Liberation_Sans',sans-serif]"><textPath href="#ring">www.9m8.cn</textPath></text>
      </svg>
      <strong className="ml-auto pb-[6px] font-['DejaVu_Serif',serif] text-[69px] leading-[90px] font-bold text-white [-webkit-text-stroke:3px_white]">www.9m8.cn</strong>
    </div>
  );
}

export default function App() {
  return (
    <div className="relative flex min-h-screen flex-col overflow-hidden bg-black font-['Liberation_Sans','Noto_Sans_CJK_SC',sans-serif]">
      <MenuBar />
      <main className="flex flex-1">
        <section className="flex min-w-0 flex-1 flex-col">
          <PeriodBar />
          <div className="flex border-b-2 border-[#a00000]">
            <div className="min-w-0 flex-1"><PriceHeader /><PriceChart /></div>
            <PriceAxis />
          </div>
          <div className="flex border-b-2 border-[#a00000]">
            <div className="min-w-0 flex-1"><ProfitHeader /><ProfitChart /></div>
            <PercentAxis />
          </div>
          <TimeAxis />
          <IndicatorTabs />
        </section>
        <QuotePanel />
        <ToolStrip />
      </main>
      <StatusBar />
      <Banner />
    </div>
  );
}
